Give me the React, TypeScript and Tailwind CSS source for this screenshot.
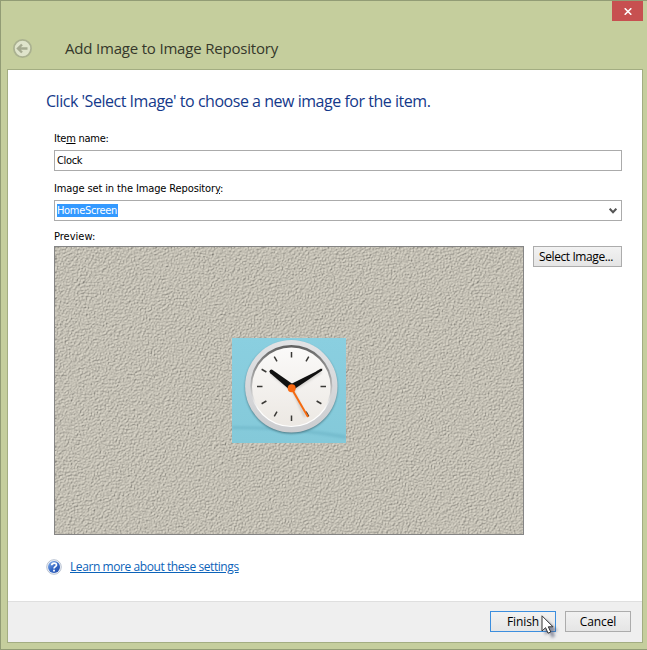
import React from "react";

const tahoma = "font-['DejaVu_Sans_Condensed','DejaVu_Sans',sans-serif] [font-stretch:condensed]";
const segoe = "font-['Open_Sans','Noto_Sans',sans-serif] [font-stretch:normal]";

function BackButton() {
  return (
    <svg width="21" height="21" viewBox="0 0 21 21" className="block shrink-0">
      <circle cx="10.5" cy="10.5" r="8.6" fill="#dfe4cb" stroke="#aab190" strokeWidth="1.7" />
      <path d="M15.5 10.5H7M10 6.5L6 10.5L10 14.5" fill="none" stroke="#a5aa90" strokeWidth="2.4" />
    </svg>
  );
}

function Clock() {
  const ticks = [0, 30, 60, 90, 120, 150, 180, 210, 240, 270, 300, 330];
  return (
    <svg width="114" height="105" viewBox="0 0 114 105" className="block">
      <defs>
        <linearGradient id="sky" x1="0" y1="0" x2="0" y2="1">
          <stop offset="0" stopColor="#8acfe0" />
          <stop offset="1" stopColor="#84c9d9" />
        </linearGradient>
        <linearGradient id="rim" x1="0" y1="0" x2="0" y2="1">
          <stop offset="0" stopColor="#e2e3e5" />
          <stop offset="1" stopColor="#cccdd0" />
        </linearGradient>
        <linearGradient id="inner" x1="0" y1="0" x2="0" y2="1">
          <stop offset="0" stopColor="#606060" />
          <stop offset="0.5" stopColor="#b8b8b8" />
          <stop offset="0.8" stopColor="#ffffff" />
        </linearGradient>
        <linearGradient id="face" x1="0" y1="0" x2="0" y2="1">
          <stop offset="0" stopColor="#fbfaf9" />
          <stop offset="1" stopColor="#ece8e3" />
        </linearGradient>
        <filter id="soft"><feGaussianBlur stdDeviation="1" /></filter>
      </defs>
      <rect width="114" height="105" fill="url(#sky)" />
      <path d="M0 88Q57 88 114 97V101Q60 91 0 91Z" fill="#6bb2c5" opacity=".55" filter="url(#soft)" />
      <circle cx="59.3" cy="49.4" r="46" fill="#37606c" opacity=".8" filter="url(#soft)" />
      <circle cx="59.3" cy="48.3" r="46.2" fill="url(#rim)" />
      <circle cx="59.3" cy="48" r="41" fill="url(#inner)" />
      <circle cx="59.3" cy="48.7" r="39.3" fill="url(#face)" />
      {ticks.map((a) => (
        <path key={a} d="M59.5 14V19.5" stroke="#3a3936" strokeWidth="1.5" transform={`rotate(${a} 59.5 48.5)`} />
      ))}
      <path d="M39 36L61 53M89 34L61 52M60 50L73 79" stroke="#b5b2af" strokeWidth="2.2" opacity=".6" filter="url(#soft)" />
      <path d="M37.3 33.4Q38 31.2 40.2 31.7L62 47L58.5 52.5L38.3 35.3Z" fill="#111" />
      <path d="M90.2 30.6L59 46L61 52L90.2 32.4Z" fill="#111" />
      <path d="M59 49.5L76 79" stroke="#f56a10" strokeWidth="2" />
      <circle cx="59.7" cy="50.3" r="4" fill="#fa6810" />
    </svg>
  );
}

function HelpIcon() {
  return (
    <svg width="16" height="16" viewBox="0 0 16 16" className="block shrink-0">
      <defs>
        <linearGradient id="help" x1="0" y1="0" x2="1" y2="1">
          <stop offset="0" stopColor="#8eb8ef" />
          <stop offset=".5" stopColor="#3569c6" />
          <stop offset="1" stopColor="#244ca9" />
        </linearGradient>
      </defs>
      <circle cx="8" cy="8" r="7.3" fill="#eef2f9" stroke="#b9c2d1" />
      <circle cx="8" cy="8" r="6" fill="url(#help)" />
      <path d="M5.7 6.3C5.8 3.4 10.6 3.3 10.5 6.1C10.4 7.6 8 7.8 8 9.6" fill="none" stroke="#fff" strokeWidth="1.7" />
      <rect x="7.1" y="10.7" width="1.8" height="1.8" fill="#fff" />
    </svg>
  );
}

function Texture() {
  return (
    <svg width="468" height="287" className="block">
      <filter id="sand" x="0" y="0" width="100%" height="100%" colorInterpolationFilters="sRGB">
        <feTurbulence type="fractalNoise" baseFrequency="0.65 0.8" numOctaves="2" seed="8" stitchTiles="stitch" result="n" />
        <feDiffuseLighting in="n" surfaceScale="1.2" diffuseConstant="1.09" lightingColor="#cbc7bb">
          <feDistantLight azimuth="225" elevation="62" />
        </feDiffuseLighting>
      </filter>
      <rect width="468" height="287" fill="#c2beb0" filter="url(#sand)" />
    </svg>
  );
}

export default function App() {
  return (
    <div className="h-[650px] w-[647px] overflow-hidden border-y border-l border-[#929c75] bg-[#c5ce9d] text-black">
      <div className="flex h-[68px] flex-col">
        <div className="flex h-5 justify-end pr-1">
          <button className="flex h-5 w-[31px] items-center justify-center bg-[#c75050]" aria-label="Close">
            <svg width="8" height="7" viewBox="0 0 8 7"><path d="M.7 .3L7.3 6.7M7.3 .3L.7 6.7" stroke="#fff" strokeWidth="1.6" /></svg>
          </button>
        </div>
        <div className="flex h-[48px] items-center pb-[1px] pl-[11px] pt-[7px]">
          <BackButton />
          <h1 className={`${segoe} ml-8 whitespace-nowrap text-[15px] leading-5 tracking-[-0.19px] text-[#35382b]`}>Add Image to Image Repository</h1>
        </div>
      </div>
      <main className="ml-[6px] flex h-[574px] w-[636px] flex-col border border-[#a3ad82] bg-white">
        <div className="flex h-[531px] flex-col pl-[38px] pr-5 pt-5">
          <h2 className={`${segoe} h-[22px] whitespace-nowrap text-[16px] leading-[22px] tracking-[-0.47px] text-[#14398a]`}>Click 'Select Image' to choose a new image for the item.</h2>
          <div className={`${tahoma} ml-2 flex flex-col whitespace-nowrap text-[11px]`}>
            <label className="mt-5 h-[18px] leading-[14px]"><span className="tracking-[-0.25px]">Ite<u>m</u> name:</span></label>
            <div className="flex h-[21px] w-[568px] items-center border border-[#ababab] pl-[2px] pt-[2px]"><span className="tracking-[-0.35px]">Clock</span></div>
            <label className="mt-[11px] h-[18px] leading-[14px]"><span className="tracking-[-0.12px]">Image set in the Image Repositor<u>y</u>:</span></label>
            <div className="flex h-[21px] w-[568px] items-center justify-between border border-[#ababab] pl-[2px] pr-1">
              <span className="h-[13px] w-[61px] bg-[#3399ff] leading-[13px] tracking-[-0.32px] text-white">HomeScreen</span>
              <svg width="8" height="6" viewBox="0 0 8 6"><path d="M.7 .7L4 4.2L7.3 .7" fill="none" stroke="#555" strokeWidth="2" /></svg>
            </div>
            <span className="mt-[9px] h-4 leading-[14px]">Preview:</span>
            <div className="flex items-start gap-[9px]">
              <div className="grid h-[289px] w-[470px] border border-[#858585]">
                <div className="col-start-1 row-start-1"><Texture /></div>
                <div className="z-10 col-start-1 row-start-1 ml-[177px] mt-[91px]"><Clock /></div>
              </div>
              <button className={`${segoe} flex h-[21px] w-[89px] items-center justify-center border border-[#acacac] bg-gradient-to-b from-[#f2f2f2] to-[#e5e5e5] pr-[3px] text-[12px] tracking-[-0.42px]`}><span>Select Ima<u>g</u>e...</span></button>
            </div>
          </div>
          <div className="mt-6 flex items-center gap-2">
            <HelpIcon />
            <a href="#" className={`${segoe} whitespace-nowrap text-[12px] leading-4 tracking-[-0.42px] text-[#0c63b9] underline`}>Learn more about these settings</a>
          </div>
        </div>
        <footer className={`${segoe} flex h-[41px] gap-[9px] border-t border-[#dfdfdf] bg-[#efefef] pl-[482px] pt-[9px] text-[12px] tracking-[-0.1px]`}>
          <button className="relative flex h-[21px] w-[66px] items-center justify-center border border-[#3c8ede] bg-gradient-to-b from-[#f2f2f2] to-[#e6e6e6]">
            <span>Finish</span>
            <svg width="22" height="27" viewBox="0 0 22 27" className="absolute left-[50px] top-[3px]">
              <defs><filter id="ps" x="-50%" y="-50%" width="200%" height="200%"><feGaussianBlur stdDeviation="1.5" /></filter></defs>
              <path d="M4 4V20L8 17L11 23L14 21L12 16H17Z" fill="#48506a" opacity=".6" filter="url(#ps)" />
              <path d="M1 .8V16L4.6 12.7L7 18.2L9.8 17L7.3 11.8H12Z" fill="#fff" stroke="#333" strokeWidth="1" />
            </svg>
          </button>
          <button className="flex h-[21px] w-[66px] items-center justify-center border border-[#acacac] bg-gradient-to-b from-[#f1f1f1] to-[#e5e5e5]">Cancel</button>
        </footer>
      </main>
    </div>
  );
}
